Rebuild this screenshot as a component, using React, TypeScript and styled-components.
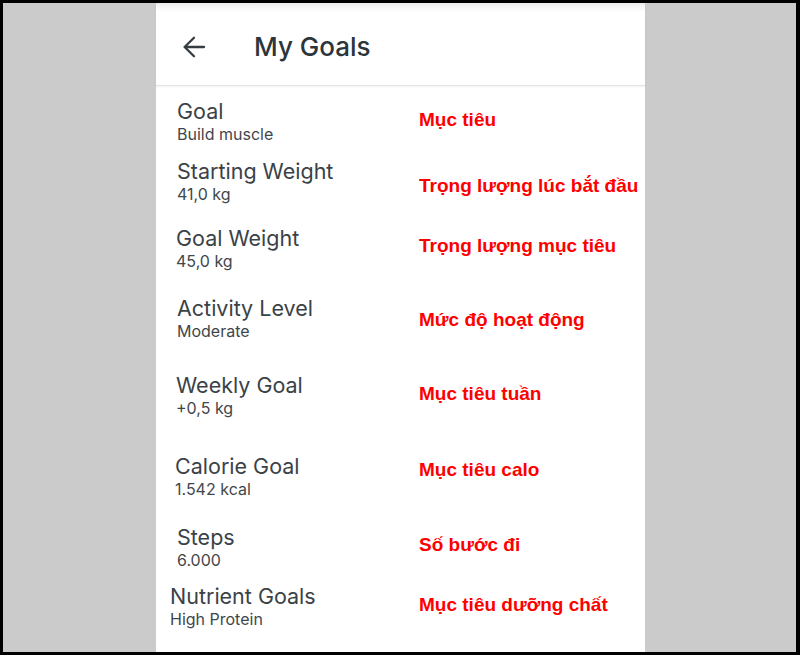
import React from "react";
import styled, { createGlobalStyle } from "styled-components";

const GlobalStyle = createGlobalStyle`
  html, body {
    margin: 0;
    padding: 0;
    background: #000;
  }
  * {
    box-sizing: border-box;
  }
`;

const StFrame = styled.div`
  width: 800px;
  height: 655px;
  border: 3px solid #000;
  border-right-width: 4px;
  background: #cbcbcb;
  display: flex;
  padding-left: 153px;
`;

const StPanel = styled.main`
  width: 489px;
  height: 100%;
  background: #fff;
  display: flex;
  flex-direction: column;
`;

const StHeader = styled.header`
  height: 83px;
  display: flex;
  align-items: center;
  gap: 48px;
  padding: 5px 0 0 26px;
  background: linear-gradient(#ebebeb 0px, #f6f6f6 4px, #fff 9px);
  border-bottom: 1px solid #e4e4e4;
  box-shadow: 0 1px 2px rgba(0, 0, 0, 0.06);
`;

const StBack = styled.svg`
  width: 24px;
  height: 24px;
  flex: none;
`;

const StTitle = styled.h1`
  margin: 0;
  font-family: Inter, "Noto Sans", sans-serif;
  font-size: 26px;
  font-weight: 500;
  color: #2b363c;
`;

const StList = styled.section`
  padding-top: 13px;
  display: flex;
  flex-direction: column;
`;

const StRow = styled.div<{ $height: number }>`
  height: ${(p) => p.$height}px;
  display: grid;
  grid-template-columns: 263px 1fr;
  align-items: start;
`;

const StInfo = styled.div<{ $indent: number }>`
  padding-left: ${(p) => p.$indent}px;
  display: flex;
  flex-direction: column;
`;

const StLabel = styled.div`
  font-family: Inter, "Noto Sans", sans-serif;
  font-size: 21.5px;
  line-height: 24px;
  color: #3a4247;
  white-space: nowrap;
`;

const StValue = styled.div`
  margin-top: 1px;
  font-family: Inter, "Noto Sans", sans-serif;
  font-size: 16px;
  line-height: 20px;
  color: #3f474b;
  white-space: nowrap;
`;

const StNote = styled.div<{ $offset: number }>`
  margin-top: ${(p) => p.$offset}px;
  font-family: "Liberation Sans", Arial, sans-serif;
  font-size: 19px;
  line-height: 22px;
  font-weight: 700;
  color: #ff0000;
  white-space: nowrap;
`;

const goals = [
  { label: "Goal", value: "Build muscle", note: "Mục tiêu", height: 60, indent: 21, offset: 10 },
  { label: "Starting Weight", value: "41,0 kg", note: "Trọng lượng lúc bắt đầu", height: 67, indent: 21, offset: 16 },
  { label: "Goal Weight", value: "45,0 kg", note: "Trọng lượng mục tiêu", height: 70, indent: 20, offset: 9 },
  { label: "Activity Level", value: "Moderate", note: "Mức độ hoạt động", height: 77, indent: 21, offset: 13 },
  { label: "Weekly Goal", value: "+0,5 kg", note: "Mục tiêu tuần", height: 81, indent: 20, offset: 10 },
  { label: "Calorie Goal", value: "1.542 kcal", note: "Mục tiêu calo", height: 71, indent: 19, offset: 5 },
  { label: "Steps", value: "6.000", note: "Số bước đi", height: 59, indent: 21, offset: 9 },
  { label: "Nutrient Goals", value: "High Protein", note: "Mục tiêu dưỡng chất", height: 60, indent: 14, offset: 10 },
];

export default function App() {
  return (
    <>
      <GlobalStyle />
      <StFrame>
        <StPanel>
          <StHeader>
            <StBack viewBox="0 0 24 24" fill="none">
              <path
                d="M22 12H2.6M12 2.7L2.6 12l9.4 9.3"
                stroke="#333d42"
                strokeWidth="2.3"
                strokeLinecap="round"
                strokeLinejoin="round"
              />
            </StBack>
            <StTitle>My Goals</StTitle>
          </StHeader>
          <StList>
            {goals.map((g) => (
              <StRow key={g.label} $height={g.height}>
                <StInfo $indent={g.indent}>
                  <StLabel>{g.label}</StLabel>
                  <StValue>{g.value}</StValue>
                </StInfo>
                <StNote $offset={g.offset}>{g.note}</StNote>
              </StRow>
            ))}
          </StList>
        </StPanel>
      </StFrame>
    </>
  );
}
